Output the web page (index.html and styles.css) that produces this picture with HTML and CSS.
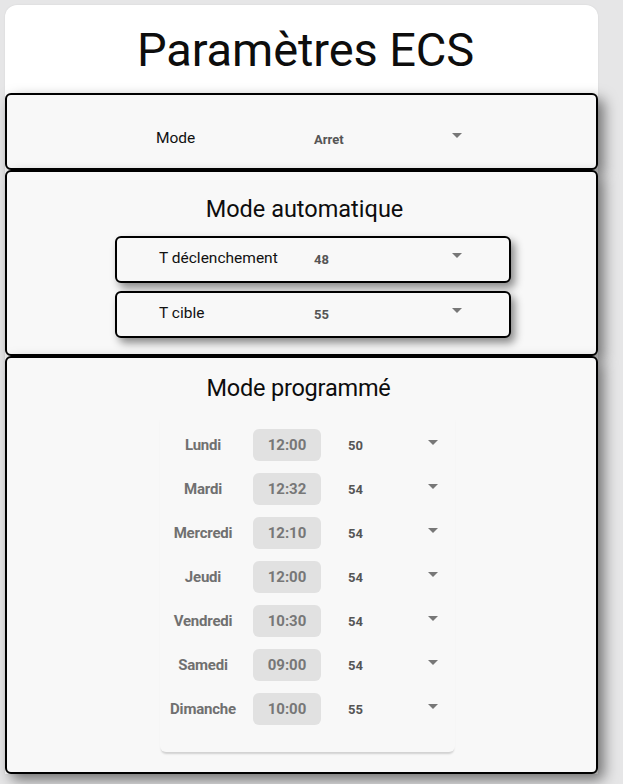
FILE: index.html
```html
<!DOCTYPE html>
<html lang="fr">
<head>
<meta charset="utf-8">
<title>Paramètres ECS</title>
<link rel="stylesheet" href="styles.css">
</head>
<body>
<main class="card">
  <h1 class="title">Paramètres ECS</h1>

  <section class="panel panel-mode">
    <div class="select-row">
      <span class="select-label">Mode</span>
      <span class="select-value">Arret</span>
      <span class="arrow"></span>
    </div>
  </section>

  <section class="panel panel-auto">
    <h2 class="section-title">Mode automatique</h2>
    <div class="field">
      <div class="select-row">
        <span class="select-label">T déclenchement</span>
        <span class="select-value">48</span>
        <span class="arrow"></span>
      </div>
    </div>
    <div class="field">
      <div class="select-row">
        <span class="select-label">T cible</span>
        <span class="select-value">55</span>
        <span class="arrow"></span>
      </div>
    </div>
  </section>

  <section class="panel panel-prog">
    <h2 class="section-title">Mode programmé</h2>
    <div class="schedule">
      <div class="day-row"><span class="day">Lundi</span><span class="time">12:00</span><span class="temp">50</span><span class="arrow"></span></div>
      <div class="day-row"><span class="day">Mardi</span><span class="time">12:32</span><span class="temp">54</span><span class="arrow"></span></div>
      <div class="day-row"><span class="day">Mercredi</span><span class="time">12:10</span><span class="temp">54</span><span class="arrow"></span></div>
      <div class="day-row"><span class="day">Jeudi</span><span class="time">12:00</span><span class="temp">54</span><span class="arrow"></span></div>
      <div class="day-row"><span class="day">Vendredi</span><span class="time">10:30</span><span class="temp">54</span><span class="arrow"></span></div>
      <div class="day-row"><span class="day">Samedi</span><span class="time">09:00</span><span class="temp">54</span><span class="arrow"></span></div>
      <div class="day-row"><span class="day">Dimanche</span><span class="time">10:00</span><span class="temp">55</span><span class="arrow"></span></div>
    </div>
  </section>
</main>
</body>
</html>
```

FILE: styles.css
```css
* {
  box-sizing: border-box;
}

html, body {
  margin: 0;
  padding: 0;
}

body {
  background: #e6e6e7;
  font-family: Roboto, "Liberation Sans", sans-serif;
  color: #111;
  width: 623px;
  height: 784px;
  overflow: hidden;
}

.card {
  margin: 5px 0 0 5px;
  width: 593px;
  background: #ffffff;
  border-radius: 12px 12px 0 0;
  box-shadow: 0 0 2px rgba(0, 0, 0, 0.08);
}

.title {
  margin: 0;
  height: 88px;
  padding: 1px 0 0 8px;
  font-size: 47px;
  font-weight: 400;
  line-height: 88px;
  text-align: center;
  color: #0d0d0d;
  letter-spacing: -0.1px;
}

/* outlined sections */
.panel {
  background: #f8f8f8;
  border: 2px solid #000;
  border-radius: 6px;
  box-shadow: 6px 6px 14px rgba(0, 0, 0, 0.5);
  position: relative;
}

.panel-mode {
  height: 77px;
  padding: 33px 0 0 149px;
}

.panel-auto {
  height: 186px;
  padding-top: 23px;
  display: flex;
  flex-direction: column;
  align-items: flex-start;
  gap: 8px;
}

.panel-prog {
  height: 418px;
  padding-top: 16px;
  display: flex;
  flex-direction: column;
  align-items: flex-start;
}

.section-title {
  margin: 0;
  font-size: 23.5px;
  font-weight: 400;
  line-height: 28px;
  color: #0d0d0d;
  align-self: stretch;
  text-align: center;
}

.panel-auto .section-title {
  padding-left: 6px;
  margin-bottom: 5px;
}

.panel-prog .section-title {
  padding-left: 0;
  margin-right: 6px;
  letter-spacing: -0.2px;
}

/* select fields */
.field {
  margin-left: 108px;
  width: 396px;
  height: 47px;
  background: #f8f8f8;
  border: 2px solid #000;
  border-radius: 6px;
  box-shadow: 4px 5px 9px rgba(0, 0, 0, 0.45);
  padding: 10px 0 0 42px;
}

.select-row {
  display: flex;
  align-items: center;
  height: 20px;
}

.select-label {
  width: 158px;
  font-size: 15.5px;
  line-height: 20px;
  color: #111;
}

.field .select-label {
  width: 155px;
}

.select-value {
  width: 138px;
  font-size: 13px;
  font-weight: 700;
  color: #555;
  padding-top: 3px;
}

.arrow {
  flex: none;
  width: 0;
  height: 0;
  border-left: 5px solid transparent;
  border-right: 5px solid transparent;
  border-top: 5px solid #777;
  margin-top: -5px;
}

/* weekly schedule */
.schedule {
  margin: 11px 0 0 153px;
  width: 295px;
  background: #f8f8f8;
  border-radius: 6px;
  box-shadow: 0 3px 2px -1px rgba(0, 0, 0, 0.16);
  padding: 16px 0 27px;
  display: flex;
  flex-direction: column;
  gap: 12px;
}

.day-row {
  display: flex;
  align-items: center;
  height: 32px;
}

.day {
  width: 86px;
  font-size: 15px;
  font-weight: 700;
  color: #707070;
  text-align: center;
  letter-spacing: -0.2px;
}

.time {
  margin-left: 7px;
  width: 68px;
  height: 32px;
  line-height: 32px;
  background: #e1e1e1;
  border-radius: 6px;
  font-size: 15px;
  font-weight: 700;
  color: #777;
  text-align: center;
}

.temp {
  margin-left: 27px;
  width: 80px;
  font-size: 13px;
  font-weight: 700;
  color: #555;
}
```
